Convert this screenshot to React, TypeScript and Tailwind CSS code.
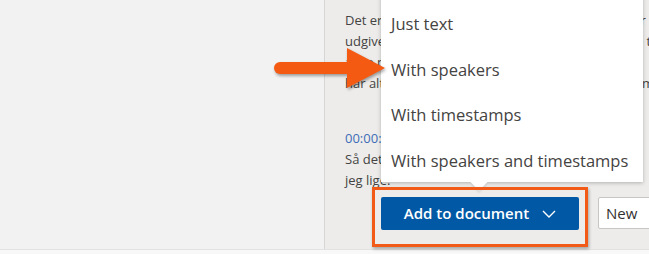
import React from "react";

const menuItems = [
	"Just text",
	"With speakers",
	"With timestamps",
	"With speakers and timestamps",
];

const transcript = [
	"Det er jo en lidt speciel situation, når man udgiver",
	"udgivelser i hele verden, og så skal man lige finde ting",
	"at se på, hvad der sker, når vi taler om det her, tl",
	"har altså ikke noget at gøre med det, vi snakker om l",
];

const Chevron = () => (
	<svg width="14" height="8" viewBox="0 0 14 8" fill="none">
		<polyline points="1,1 7,7 13,1" stroke="white" strokeWidth="1.4" />
	</svg>
);

const Arrow = () => (
	<svg
		className="absolute left-[268px] top-[44px] drop-shadow-[1px_2px_1.5px_rgba(0,0,0,0.35)]"
		width="122"
		height="50"
		viewBox="268 44 122 50"
	>
		<rect x="274" y="62" width="80" height="12" rx="6" fill="#f55a12" />
		<polygon points="347,48 385,68 347,88" fill="#f55a12" />
	</svg>
);

export default function App() {
	return (
		<div
			className="relative w-[649px] h-[254px] overflow-hidden flex flex-col bg-[#f7f7f7]"
			style={{ fontFamily: '"Open Sans", "Noto Sans", sans-serif' }}
		>
			<div className="flex h-[249px] shrink-0">
				<div className="w-[325px] shrink-0 bg-[#f2f2f2] border-r border-[#d6d6d6]" />
				<div className="flex-1 min-w-0 bg-[#edeceb] flex flex-col">
					<div className="h-[188px] overflow-hidden pl-[20px] pt-[10px] text-[13px] leading-[21px] text-[#444342] whitespace-nowrap">
						{transcript.map((line) => (
							<div key={line}>{line}</div>
						))}
						<div className="h-[34px]" />
						<div className="text-[#3d6cb6]">00:00:12</div>
						<div>Så det var jo egentlig det, jeg ville sige, og så ville</div>
						<div>jeg lige.</div>
					</div>
					<div className="flex items-start pl-[56px] pt-[9px] gap-[19px]">
						<button className="w-[198px] h-[33px] shrink-0 bg-[#0159a5] text-white text-[15px] font-semibold rounded-[2px] flex items-center justify-center gap-[13px]">
							Add to document
							<Chevron />
						</button>
						<button className="w-[80px] h-[32px] shrink-0 bg-white border border-[#c8c6c4] rounded-[2px] text-[15px] text-[#323130] text-left pl-[7px]">
							New
						</button>
					</div>
				</div>
			</div>
			<div className="flex-1 border-t border-[#e2e2e2] bg-[#f8f8f8]" />

			{/* dropdown menu */}
			<div className="absolute left-[381px] top-[-4px] w-[262px] h-[186px] bg-white shadow-[0_1px_4px_rgba(0,0,0,0.25)] pl-[10px] pt-[15px] text-[16.5px] text-[#444342]">
				{menuItems.map((item) => (
					<div key={item} className="h-[45.5px] leading-[26px]">
						{item}
					</div>
				))}
				<div className="absolute left-[92px] bottom-[-6px] w-[12px] h-[12px] bg-white rotate-45 shadow-[2px_2px_2px_rgba(0,0,0,0.08)]" />
			</div>

			{/* highlight box */}
			<div className="absolute left-[372px] top-[187px] w-[216px] h-[60px] border-[3px] border-[#f15a17] shadow-[1px_2px_3px_rgba(0,0,0,0.3)]" />

			<Arrow />
		</div>
	);
}
